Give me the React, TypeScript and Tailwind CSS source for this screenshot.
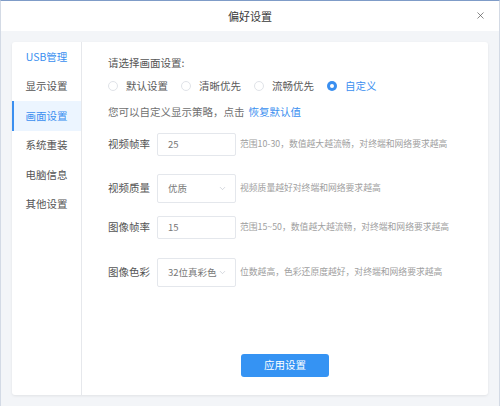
import { X, ChevronDown } from 'lucide-react';

const menu = ['USB管理', '显示设置', '画面设置', '系统重装', '电脑信息', '其他设置'];
const radios = ['默认设置', '清晰优先', '流畅优先', '自定义'];

function Radio({ label, checked }: { label: string; checked?: boolean }) {
  return (
    <label className="flex items-center mr-[13px]">
      {checked ? (
        <span className="w-[10px] h-[10px] rounded-full bg-[#3a8ff0] flex items-center justify-center">
          <span className="w-[4px] h-[4px] rounded-full bg-white" />
        </span>
      ) : (
        <span className="w-[10px] h-[10px] rounded-full border border-[#e0e3e8] bg-white" />
      )}
      <span className={`ml-[8px] ${checked ? 'text-[#3a8ff0]' : 'text-[#5a5a5a]'}`}>{label}</span>
    </label>
  );
}

function Row({
  label,
  value,
  hint,
  select,
  className,
}: {
  label: string;
  value: string;
  hint: string;
  select?: boolean;
  className?: string;
}) {
  return (
    <div className={`flex items-center ${className ?? ''}`}>
      <span className="w-[49px] text-[10.5px] text-[#555]">{label}</span>
      <div
        className={`w-[79px] ${select ? 'h-[29px]' : 'h-[23px]'} border border-[#e4e7ec] rounded-[2px] bg-white flex items-center pl-[10px] pr-[8px] text-[9.5px] text-[#777]`}
      >
        <span className="flex-1">{value}</span>
        {select && <ChevronDown size={9} strokeWidth={1.5} className="text-[#b6bcc6]" />}
      </div>
      <span className="ml-[4px] text-[8.8px] text-[#a0a0a0]">{hint}</span>
    </div>
  );
}

export default function App() {
  return (
    <div className="w-[500px] h-[406px] flex flex-col bg-[#f3f5f8] border-t border-[#7f9cc8] border-x border-x-[#d3dae5] font-['Noto_Sans_CJK_SC','Noto_Sans',sans-serif] leading-none">
      {/* title bar */}
      <div className="h-[30px] bg-white relative flex items-center justify-center shrink-0">
        <span className="text-[11px] text-[#3a3a3a]">偏好设置</span>
        <button type="button" className="absolute right-[13px] top-[9px] text-[#555]" aria-label="关闭">
          <X size={11} strokeWidth={1.5} />
        </button>
      </div>

      {/* body */}
      <div className="flex-1 px-[11px] pt-[11px] pb-[11px]">
        <div className="h-full bg-white rounded-[3px] shadow-[0_1px_3px_rgba(0,0,0,0.08)] flex">
          {/* side menu */}
          <div className="w-[70px] border-r border-[#e6e8ec] flex flex-col">
            {menu.map((m, i) => (
              <div
                key={m}
                className={`h-[29.5px] flex items-center justify-center text-[10.5px] ${
                  i === 2
                    ? 'bg-[#ecf5ff] text-[#3a8ff0] border-l-2 border-[#3a8ff0] pr-[2px]'
                    : i === 0
                      ? 'text-[#3a8ff0]'
                      : 'text-[#555]'
                }`}
              >
                {m}
              </div>
            ))}
          </div>

          {/* content */}
          <div className="flex-1 pl-[26px] pt-[13px] flex flex-col text-[10.5px]">
            <div className="h-[16px] flex items-center text-[#555]">请选择画面设置:</div>
            <div className="h-[16px] mt-[7px] flex items-center">
              {radios.map((r, i) => (
                <Radio key={r} label={r} checked={i === 3} />
              ))}
            </div>
            <div className="h-[16px] mt-[10px] flex items-center text-[#707070]">
              您可以自定义显示策略，点击<span className="ml-[4px] text-[#3a8ff0]">恢复默认值</span>
            </div>

            <Row className="mt-[13px]" label="视频帧率" value="25" hint="范围10-30，数值越大越流畅，对终端和网络要求越高" />
            <Row className="mt-[18px]" label="视频质量" value="优质" select hint="视频质量越好对终端和网络要求越高" />
            <Row className="mt-[13px]" label="图像帧率" value="15" hint="范围15~50，数值越大越流畅，对终端和网络要求越高" />
            <Row className="mt-[19px]" label="图像色彩" value="32位真彩色" select hint="位数越高，色彩还原度越好，对终端和网络要求越高" />

            <div className="mt-[67px] flex justify-center pr-[26px]">
              <button
                type="button"
                className="w-[88px] h-[23px] rounded-[3px] bg-[#3593f3] text-white text-[10.5px]"
              >
                应用设置
              </button>
            </div>
          </div>
        </div>
      </div>
    </div>
  );
}
